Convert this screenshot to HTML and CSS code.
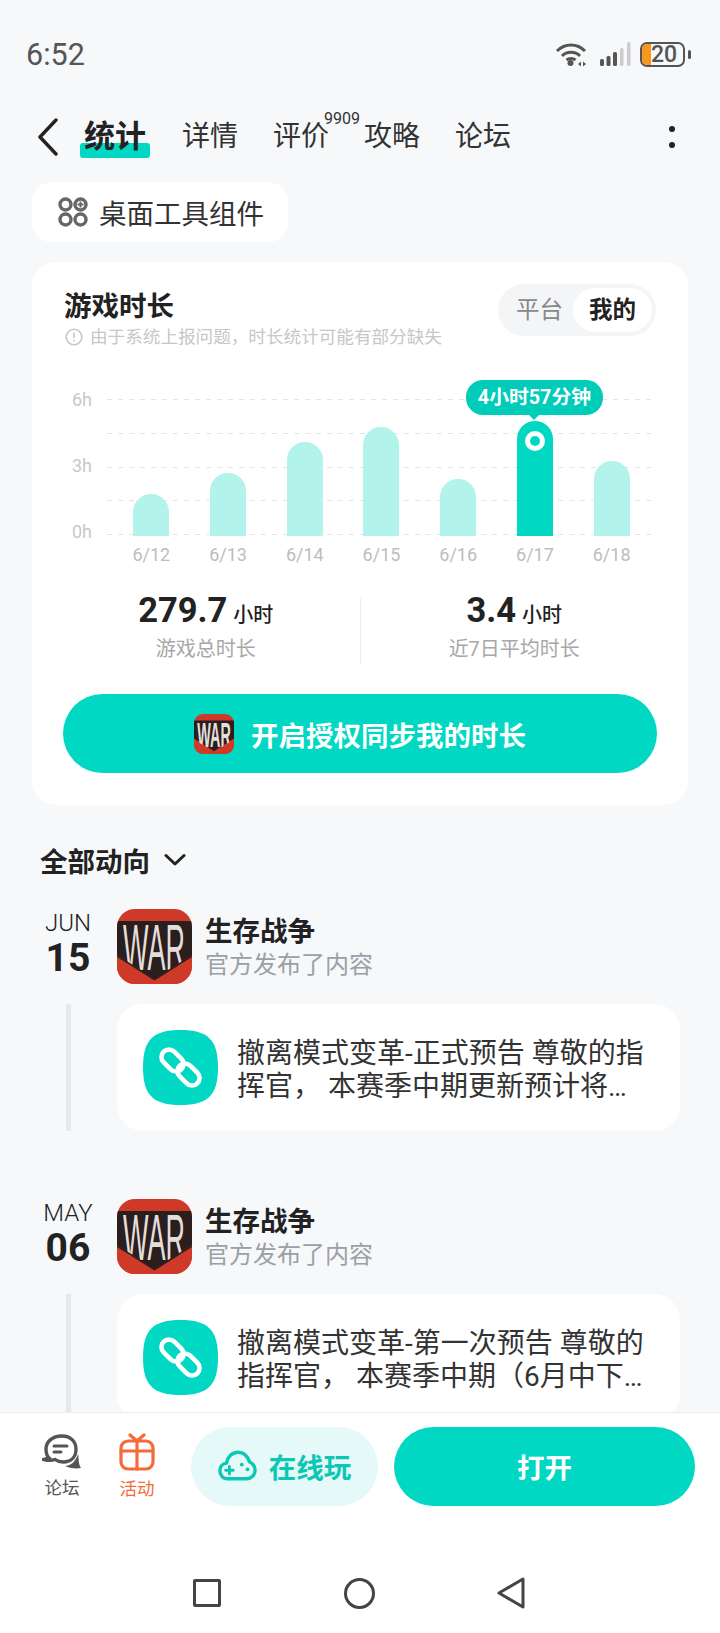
FILE: index.html
```html
<!DOCTYPE html>
<html lang="zh-CN">
<head>
  <meta charset="UTF-8">
  <meta name="viewport" content="width=device-width, initial-scale=1.0">
  <title>统计</title>
  <link rel="stylesheet" href="styles.css">
</head>
<body>
  <main class="content">
    <div class="status-bar">
      <span class="time">6:52</span>
      <div class="status-icons">
        <svg class="wifi" width="32" height="25" viewBox="0 0 32 25" fill="none" stroke="#555" stroke-width="3">
          <path d="M2 9C10 1 22 1 30 9"/>
          <path d="M7 14C12 9 20 9 25 14"/>
          <path d="M11.5 18C14 16 18 16 20.5 18"/>
          <circle cx="15.5" cy="21" r="3" fill="#555" stroke="none"/>
          <path d="M23 22L26 19.5V24.5Z M31 22L28 19.5V24.5Z" fill="#555" stroke="none"/>
        </svg>
        <svg class="signal" width="31" height="24" viewBox="0 0 31 24">
          <rect x="0" y="17" width="4" height="7" rx="1.5" fill="#555"/>
          <rect x="6.5" y="14" width="4" height="10" rx="1.5" fill="#555"/>
          <rect x="13" y="10" width="4" height="14" rx="1.5" fill="#555"/>
          <rect x="20" y="6" width="3.5" height="18" rx="1.5" fill="#ccc"/>
          <rect x="27" y="0" width="3.5" height="24" rx="1.5" fill="#ccc"/>
        </svg>
        <div class="battery">
          <div class="battery-level"></div>
          <span class="battery-text">20</span>
        </div>
        <div class="battery-nub"></div>
      </div>
    </div>

    <nav class="tabs">
      <svg class="back" width="22" height="38" viewBox="0 0 22 38" fill="none" stroke="#222" stroke-width="3.4" stroke-linecap="round" stroke-linejoin="round">
        <path d="M19 2L3 19L19 36"/>
      </svg>
      <div class="tab-list">
        <a class="tab active">统计</a>
        <a class="tab">详情</a>
        <a class="tab">评价<sup class="tab-count">9909</sup></a>
        <a class="tab">攻略</a>
        <a class="tab">论坛</a>
      </div>
      <div class="more"><i></i><i></i></div>
    </nav>

    <div class="chip">
      <svg width="30" height="30" viewBox="0 0 30 30" fill="none" stroke="#666" stroke-width="3.4">
        <circle cx="7.5" cy="7.5" r="5.5"/>
        <circle cx="22.5" cy="7.5" r="5.5"/>
        <circle cx="7.5" cy="22.5" r="5.5"/>
        <circle cx="22.5" cy="22.5" r="5.5"/>
        <path d="M22.5 4.5V10.5M19.5 7.5H25.5" stroke-width="2"/>
      </svg>
      <span>桌面工具组件</span>
    </div>

    <section class="card">
      <div class="card-head">
        <div class="card-title">
          <h2>游戏时长</h2>
          <p class="note">
            <svg width="18" height="18" viewBox="0 0 18 18" fill="none" stroke="#c4c7cc" stroke-width="1.6">
              <circle cx="9" cy="9" r="7.8"/>
              <path d="M9 4.5V10M9 12V13.6"/>
            </svg>
            由于系统上报问题，时长统计可能有部分缺失
          </p>
        </div>
        <div class="toggle">
          <span class="toggle-item">平台</span>
          <span class="toggle-item on">我的</span>
        </div>
      </div>

      <div class="chart">
        <div class="y-axis">
          <span>6h</span>
          <span>3h</span>
          <span>0h</span>
        </div>
        <div class="chart-main">
          <div class="plot">
            <div class="grid-lines"><i></i><i></i><i></i><i></i><i></i></div>
            <div class="bars">
              <div class="bar-cell"><div class="bar" style="height:42px"></div></div>
              <div class="bar-cell"><div class="bar" style="height:63px"></div></div>
              <div class="bar-cell"><div class="bar" style="height:94px"></div></div>
              <div class="bar-cell"><div class="bar" style="height:109px"></div></div>
              <div class="bar-cell"><div class="bar" style="height:57px"></div></div>
              <div class="bar-cell">
                <div class="bar current" style="height:115px">
                  <div class="bar-dot"></div>
                  <div class="bar-tip">4小时57分钟</div>
                </div>
              </div>
              <div class="bar-cell"><div class="bar" style="height:75px"></div></div>
            </div>
          </div>
          <div class="dates">
            <span>6/12</span><span>6/13</span><span>6/14</span><span>6/15</span><span>6/16</span><span>6/17</span><span>6/18</span>
          </div>
        </div>
      </div>

      <div class="stats">
        <div class="stat left">
          <div class="stat-value"><b>279.7</b><small>小时</small></div>
          <div class="stat-label">游戏总时长</div>
        </div>
        <div class="stat-line"></div>
        <div class="stat right">
          <div class="stat-value"><b>3.4</b><small>小时</small></div>
          <div class="stat-label">近7日平均时长</div>
        </div>
      </div>

      <button class="sync-btn">
        <svg class="war-logo small" viewBox="0 0 75 75">
          <rect width="75" height="75" fill="#cf3a28"/>
          <path d="M0 12H75V46L37.5 70L0 46Z" fill="#2b1e1e"/>
          <text transform="translate(6 61) scale(1 2.4)" font-family="Liberation Sans" font-size="27" fill="#e4dedb">WAR</text>
          <path d="M0 48L37.5 71L75 48V75H0Z" fill="#cf3a28"/>
        </svg>
        <span>开启授权同步我的时长</span>
      </button>
    </section>

    <div class="feed-title">
      <span>全部动向</span>
      <svg width="22" height="14" viewBox="0 0 22 14" fill="none" stroke="#222" stroke-width="3" stroke-linecap="round" stroke-linejoin="round">
        <path d="M2 2.5L11 11L20 2.5"/>
      </svg>
    </div>

    <article class="post">
      <div class="post-head">
        <div class="post-date"><span>JUN</span><b>15</b></div>
        <svg class="war-logo" viewBox="0 0 75 75">
          <rect width="75" height="75" fill="#cf3a28"/>
          <path d="M0 12H75V46L37.5 70L0 46Z" fill="#2b1e1e"/>
          <text transform="translate(6 61) scale(1 2.4)" font-family="Liberation Sans" font-size="27" fill="#e4dedb">WAR</text>
          <path d="M0 48L37.5 71L75 48V75H0Z" fill="#cf3a28"/>
          <path d="M0 47L37.5 70.5L75 47" fill="none" stroke="#2b1e1e" stroke-width="1.5"/>
        </svg>
        <div class="post-who">
          <h3>生存战争</h3>
          <p>官方发布了内容</p>
        </div>
      </div>
      <div class="post-body">
        <div class="post-line"></div>
        <div class="post-card">
          <svg class="post-tile" width="75" height="75" viewBox="0 0 75 75">
            <path d="M37.5 0C65 0 75 10 75 37.5S65 75 37.5 75S0 65 0 37.5S10 0 37.5 0Z" fill="#00d8c4"/>
            <g fill="none" stroke="#fff" stroke-width="4.6">
              <rect x="17" y="23" width="25" height="15" rx="7.5" transform="rotate(45 29.5 30.5)"/>
              <rect x="33" y="37" width="25" height="15" rx="7.5" transform="rotate(45 45.5 44.5)"/>
            </g>
          </svg>
          <p>撤离模式变革-正式预告 尊敬的指挥官， 本赛季中期更新预计将…</p>
        </div>
      </div>
    </article>

    <article class="post">
      <div class="post-head">
        <div class="post-date"><span>MAY</span><b>06</b></div>
        <svg class="war-logo" viewBox="0 0 75 75">
          <rect width="75" height="75" fill="#cf3a28"/>
          <path d="M0 12H75V46L37.5 70L0 46Z" fill="#2b1e1e"/>
          <text transform="translate(6 61) scale(1 2.4)" font-family="Liberation Sans" font-size="27" fill="#e4dedb">WAR</text>
          <path d="M0 48L37.5 71L75 48V75H0Z" fill="#cf3a28"/>
          <path d="M0 47L37.5 70.5L75 47" fill="none" stroke="#2b1e1e" stroke-width="1.5"/>
        </svg>
        <div class="post-who">
          <h3>生存战争</h3>
          <p>官方发布了内容</p>
        </div>
      </div>
      <div class="post-body">
        <div class="post-line"></div>
        <div class="post-card">
          <svg class="post-tile" width="75" height="75" viewBox="0 0 75 75">
            <path d="M37.5 0C65 0 75 10 75 37.5S65 75 37.5 75S0 65 0 37.5S10 0 37.5 0Z" fill="#00d8c4"/>
            <g fill="none" stroke="#fff" stroke-width="4.6">
              <rect x="17" y="23" width="25" height="15" rx="7.5" transform="rotate(45 29.5 30.5)"/>
              <rect x="33" y="37" width="25" height="15" rx="7.5" transform="rotate(45 45.5 44.5)"/>
            </g>
          </svg>
          <p>撤离模式变革-第一次预告 尊敬的指挥官， 本赛季中期（6月中下…</p>
        </div>
      </div>
    </article>
  </main>

  <footer class="bottom">
    <div class="actions">
      <div class="action">
        <svg width="40" height="36" viewBox="0 0 40 36" fill="none" stroke="#555" stroke-width="3.4" stroke-linecap="round">
          <path d="M20 2C10 2 4 8 4 15C4 19 5 22 7 24L2 25.5C6 26.5 10 26.5 13 25.5C15 27 18 28 21 28C30 28 34 22 34 15C34 8 29 2 20 2Z"/>
          <path d="M12 12H25M12 18H19" stroke-width="3"/>
          <path d="M36 20C37 25 36 29 39 34C34 35 27 34 23 32C29 32 34 27 36 20Z" fill="#555" stroke="none"/>
        </svg>
        <span>论坛</span>
      </div>
      <div class="action hot">
        <svg width="36" height="38" viewBox="0 0 36 38" fill="none" stroke="#f26b38" stroke-width="3.2" stroke-linecap="round" stroke-linejoin="round">
          <path d="M11 2L18 8L25 2"/>
          <rect x="2" y="8" width="32" height="28" rx="7"/>
          <path d="M2 18H34M18 8V36"/>
        </svg>
        <span>活动</span>
      </div>
      <button class="play-btn">
        <svg width="39" height="31" viewBox="0 0 41 32" fill="none" stroke="#0cc7b5" stroke-width="3.6" stroke-linecap="round" stroke-linejoin="round">
          <path d="M10 30C5 30 2 26 2 21.5C2 17 5 14 9 13.5C10 7 15 2 21 2C27 2 31 6 33 12C37 14 39 17 39 21C39 26 35 30 30 30Z"/>
          <path d="M8 21H16M12 17V25" stroke-width="3"/>
          <circle cx="25" cy="15" r="2" fill="#0cc7b5" stroke="none"/>
          <circle cx="31" cy="20" r="2" fill="#0cc7b5" stroke="none"/>
        </svg>
        <span>在线玩</span>
      </button>
      <button class="open-btn">打开</button>
    </div>
    <div class="sys-nav">
      <div class="nav-square"></div>
      <div class="nav-circle"></div>
      <svg width="28" height="32" viewBox="0 0 28 32" fill="none" stroke="#444" stroke-width="3" stroke-linejoin="round">
        <path d="M26 2V30L2 16Z"/>
      </svg>
    </div>
  </footer>
</body>
</html>
```

FILE: styles.css
```css
* {
  box-sizing: border-box;
}

body {
  margin: 0;
  width: 720px;
  height: 1633px;
  display: flex;
  flex-direction: column;
  overflow: hidden;
  background-color: #f7f8fa;
  color: #222;
  font-family: Roboto, "Noto Sans CJK SC", sans-serif;
}

h2, h3, p {
  margin: 0;
}

.content {
  height: 1412px;
  overflow: hidden;
  flex-shrink: 0;
}

/* status bar */
.status-bar {
  height: 108px;
  padding: 0 29px 0 26px;
  display: flex;
  align-items: center;
  justify-content: space-between;
}
.time {
  font-size: 30.5px;
  color: #555;
}
.status-icons {
  display: flex;
  align-items: center;
}
.signal {
  margin-left: 13px;
}
.battery {
  width: 45px;
  height: 25px;
  margin-left: 9px;
  border: 2px solid #555;
  border-radius: 7px;
  display: flex;
  align-items: center;
}
.battery-level {
  width: 9px;
  height: 100%;
  border-radius: 5px 0 0 5px;
  background-color: #f7981d;
}
.battery-text {
  font-size: 23px;
  font-weight: 500;
  color: #555;
}
.battery-nub {
  width: 3px;
  height: 9px;
  margin-left: 3px;
  border-radius: 2px;
  background-color: #555;
}

/* tabs */
.tabs {
  height: 56px;
  padding: 2px 45px 0 37px;
  display: flex;
  align-items: center;
}
.tab-list {
  margin-left: 25px;
  display: flex;
  align-items: center;
  gap: 35px;
  flex: 1;
}
.tab {
  position: relative;
  font-size: 28px;
  line-height: 40px;
  color: #333;
}
.tab.active {
  z-index: 0;
  margin-right: 1px;
  font-size: 31px;
  font-weight: 700;
  color: #222;
}
.tab.active::after {
  content: "";
  position: absolute;
  z-index: -1;
  left: -4px;
  right: -4px;
  top: 26px;
  height: 15px;
  border-radius: 3px;
  background-color: #00d8c4;
}
.tab-count {
  position: absolute;
  left: 51px;
  top: -8px;
  font-size: 16px;
  line-height: 20px;
  color: #333;
}
.more {
  display: flex;
  flex-direction: column;
  gap: 10px;
}
.more i {
  display: block;
  width: 6px;
  height: 6px;
  border-radius: 50%;
  background-color: #222;
}

/* chip */
.chip {
  width: 256px;
  height: 60px;
  margin: 18px 0 0 32px;
  padding-left: 26px;
  display: flex;
  align-items: center;
  gap: 11px;
  border-radius: 20px;
  background-color: #fff;
  font-size: 27.5px;
  color: #333;
}

/* duration card */
.card {
  width: 656px;
  margin: 20px 0 0 32px;
  padding: 22px 32px 32px;
  border-radius: 24px;
  background-color: #fff;
}
.card-head {
  display: flex;
  justify-content: space-between;
  align-items: flex-start;
}
.card-title {
  margin-top: 4px;
}
.card-title h2 {
  font-size: 27.5px;
  line-height: 38px;
  font-weight: 700;
}
.note {
  display: flex;
  align-items: center;
  gap: 7px;
  padding-left: 1px;
  font-size: 17.6px;
  line-height: 22px;
  color: #c4c7cc;
}
.toggle {
  width: 158px;
  height: 52px;
  padding: 4px 4px 4px 8px;
  display: flex;
  align-items: center;
  border-radius: 26px;
  background-color: #f4f5f7;
  font-size: 23.5px;
  color: #888;
}
.toggle-item {
  flex: 1;
  height: 44px;
  line-height: 44px;
  text-align: center;
  border-radius: 22px;
}
.toggle-item.on {
  flex: 0 0 79px;
  background-color: #fff;
  font-weight: 700;
  color: #222;
}

/* chart */
.chart {
  margin-top: 51px;
  display: flex;
}
.y-axis {
  width: 43px;
  height: 156px;
  margin-top: -11px;
  padding-left: 8px;
  display: flex;
  flex-direction: column;
  justify-content: space-between;
  font-size: 18px;
  line-height: 24px;
  color: #c8c8c8;
}
.chart-main {
  width: 546px;
}
.plot {
  position: relative;
  height: 137px;
}
.grid-lines {
  position: absolute;
  left: 0;
  right: 0;
  top: 0;
  height: 136px;
  display: flex;
  flex-direction: column;
  justify-content: space-between;
}
.grid-lines i {
  display: block;
  height: 1px;
  background-image: repeating-linear-gradient(90deg, #e4e4e4 0 5px, transparent 5px 11px);
}
.bars {
  position: relative;
  height: 100%;
  padding: 0 3px 0 6px;
  display: grid;
  grid-template-columns: repeat(7, 1fr);
  align-items: end;
}
.bar-cell {
  display: flex;
  justify-content: center;
}
.bar {
  position: relative;
  width: 36px;
  border-radius: 18px 18px 0 0;
  background-color: #b2f3ec;
}
.bar.current {
  background-color: #00d8c4;
}
.bar-dot {
  position: absolute;
  left: 8px;
  top: 10px;
  width: 20px;
  height: 20px;
  border: 5px solid #fff;
  border-radius: 50%;
}
.bar-tip {
  position: absolute;
  left: -51px;
  top: -41px;
  width: 137px;
  height: 35px;
  border-radius: 17px;
  background-color: #00cdb9;
  color: #fff;
  font-size: 19.8px;
  font-weight: 700;
  line-height: 35px;
  text-align: center;
  white-space: nowrap;
}
.bar-tip::after {
  content: "";
  position: absolute;
  left: 62px;
  top: 34px;
  border-left: 6px solid transparent;
  border-right: 6px solid transparent;
  border-top: 6px solid #00cdb9;
}
.dates {
  margin-top: 7px;
  padding: 0 3px 0 6px;
  display: grid;
  grid-template-columns: repeat(7, 1fr);
  font-size: 18px;
  line-height: 24px;
  text-align: center;
  color: #bdbdbd;
}

/* stats */
.stats {
  margin-top: 25px;
  display: grid;
  grid-template-columns: 1fr 1px 1fr;
  text-align: center;
}
.stat.left {
  padding-right: 12px;
}
.stat.right {
  padding-left: 12px;
}
.stat-value {
  height: 36px;
  line-height: 36px;
}
.stat-value b {
  font-size: 34.5px;
  font-weight: 700;
}
.stat-value small {
  margin-left: 6px;
  font-size: 20px;
  font-weight: 500;
}
.stat-label {
  margin-top: 7px;
  font-size: 20px;
  line-height: 28px;
  color: #a8a8a8;
}
.stat-line {
  height: 66px;
  margin-top: 6px;
  background-color: #eee;
}

/* button */
.sync-btn {
  width: 594px;
  height: 79px;
  margin: 30px 0 0 -1px;
  padding: 0;
  display: flex;
  align-items: center;
  justify-content: center;
  gap: 17px;
  border: 0;
  border-radius: 40px;
  background-color: #00d8c4;
  color: #fff;
  font-family: inherit;
  font-size: 27.5px;
  font-weight: 700;
}

/* logo */
.war-logo {
  width: 75px;
  height: 75px;
  flex-shrink: 0;
  border-radius: 18px;
}
.war-logo.small {
  width: 40px;
  height: 40px;
  border-radius: 9px;
}

/* feed */
.feed-title {
  height: 40px;
  margin: 35px 0 0 40px;
  display: flex;
  align-items: center;
  gap: 14px;
  font-size: 27.5px;
  font-weight: 700;
}
.post {
  margin-top: 29px;
}
.post + .post {
  margin-top: 68px;
}
.post-head {
  height: 75px;
  display: flex;
  align-items: center;
}
.post-date {
  width: 117px;
  padding: 0 0 6px 19px;
  display: flex;
  flex-direction: column;
  align-items: center;
  justify-content: center;
}
.post-date span {
  font-size: 24px;
  line-height: 28px;
  font-weight: 300;
}
.post-date b {
  font-size: 39px;
  line-height: 42px;
}
.post-who {
  margin-left: 13px;
}
.post-who h3 {
  font-size: 27.5px;
  line-height: 37px;
  font-weight: 700;
}
.post-who p {
  font-size: 24px;
  line-height: 30px;
  color: #9aa0a6;
}
.post-body {
  margin-top: 20px;
  padding-left: 66px;
  display: flex;
}
.post-line {
  width: 5px;
  background-color: #e6e8ee;
}
.post-card {
  width: 563px;
  margin-left: 46px;
  padding: 26px 32px 26px 26px;
  display: flex;
  align-items: center;
  gap: 19px;
  border-radius: 26px;
  background-color: #fff;
}
.post-tile {
  flex-shrink: 0;
}
.post-card p {
  width: 413px;
  padding-top: 5px;
  font-size: 28px;
  line-height: 33px;
  color: #333;
}

/* bottom bar */
.bottom {
  flex: 1;
  border-top: 1px solid #ebecef;
  background-color: #fff;
}
.actions {
  height: 79px;
  margin-top: 14px;
  padding-left: 25px;
  display: flex;
  align-items: center;
}
.action {
  width: 74px;
  display: flex;
  flex-direction: column;
  align-items: center;
  gap: 7px;
  font-size: 17.5px;
  line-height: 22px;
  color: #555;
}
.action.hot {
  margin-left: 1px;
  color: #f26b38;
}
.play-btn, .open-btn {
  height: 79px;
  padding: 0 0 2px;
  display: flex;
  align-items: center;
  justify-content: center;
  border: 0;
  border-radius: 40px;
  font-family: inherit;
  font-size: 27.5px;
  font-weight: 700;
}
.play-btn {
  width: 187px;
  margin-left: 17px;
  gap: 12px;
  background-color: #e4f9f8;
  color: #0cc7b5;
}
.open-btn {
  width: 301px;
  margin-left: 16px;
  background-color: #00d8c4;
  color: #fff;
}
.sys-nav {
  margin-top: 71px;
  padding-left: 193px;
  display: flex;
  align-items: center;
}
.nav-square {
  width: 28px;
  height: 28px;
  border: 3px solid #444;
  border-radius: 2px;
}
.nav-circle {
  width: 31px;
  height: 31px;
  margin: 0 122px 0 123px;
  border: 3px solid #444;
  border-radius: 50%;
}
```
